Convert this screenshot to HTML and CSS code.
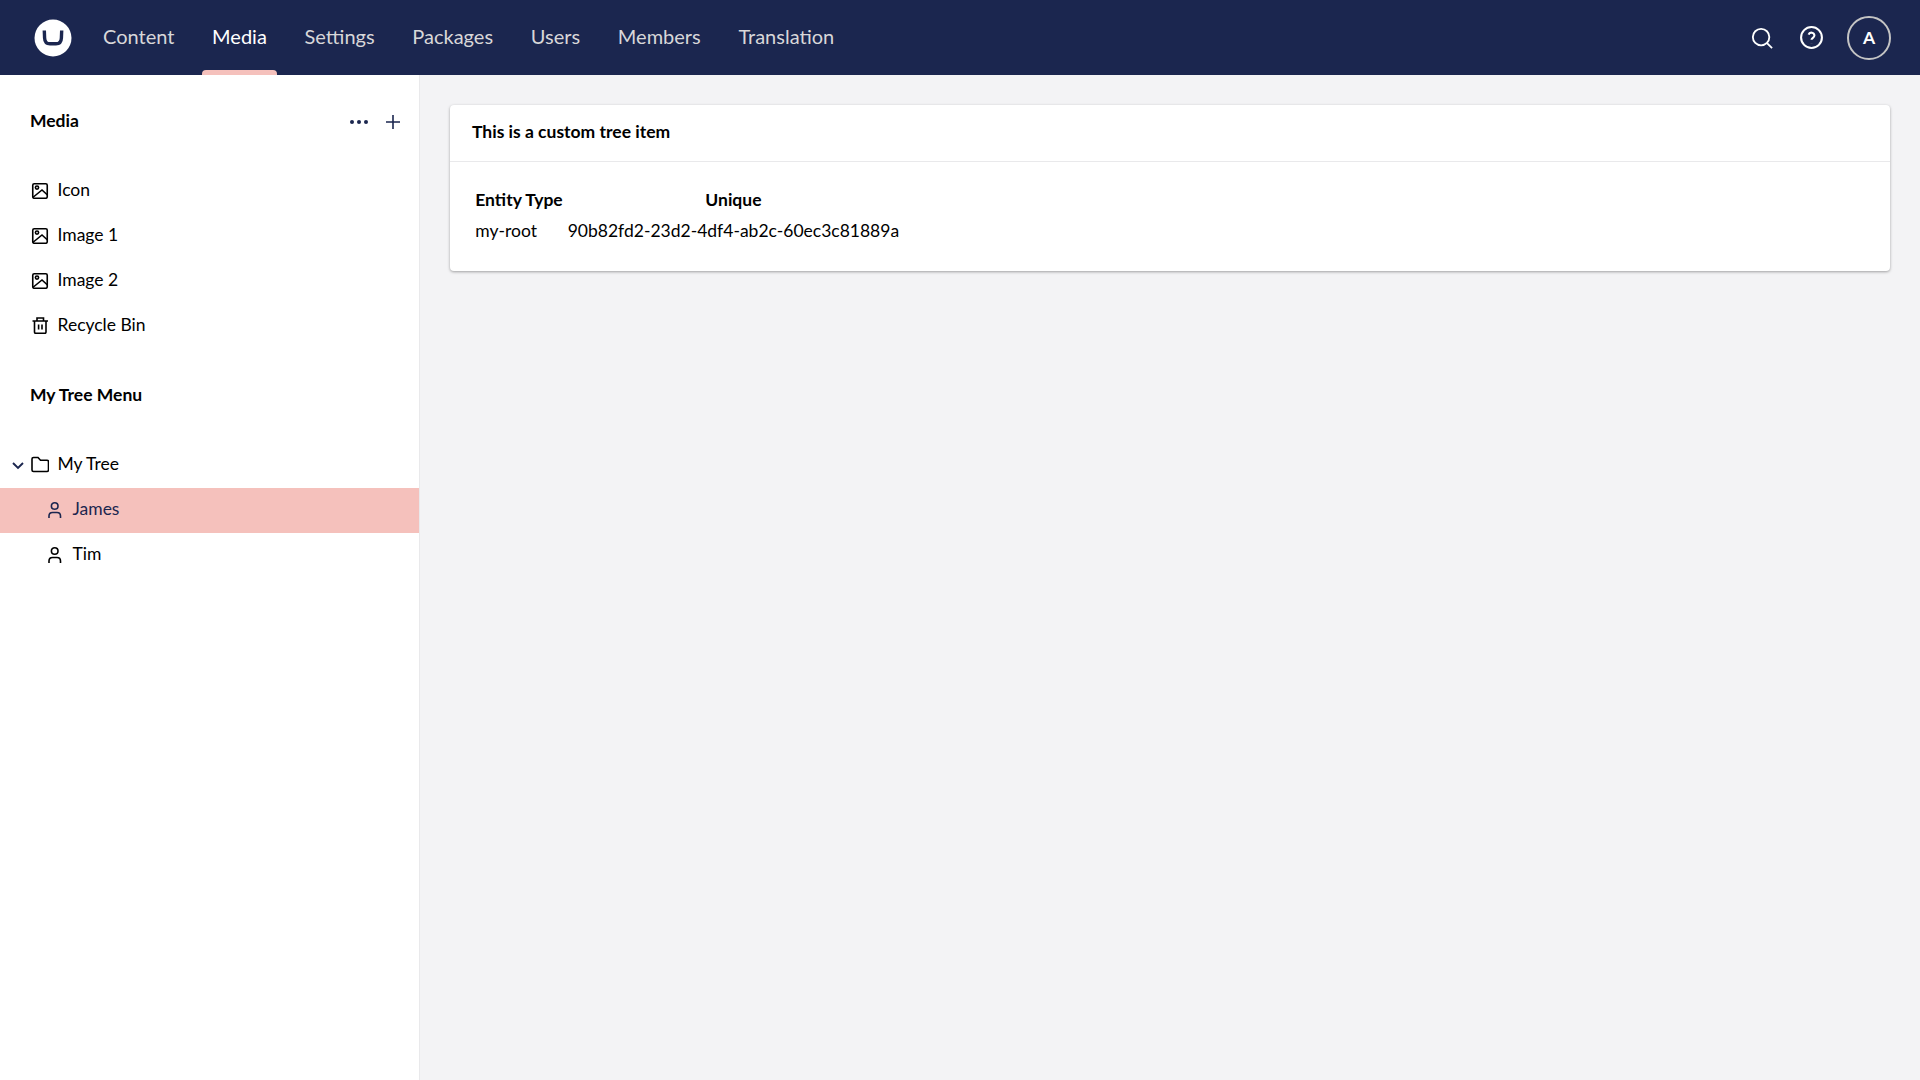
FILE: index.html
```html
<!DOCTYPE html>
<html lang="en">

<head>
  <meta charset="UTF-8" />
  <title>Media</title>
  <link rel="stylesheet" href="styles.css">
</head>

<body>
  <header class="topbar">
    <svg class="logo" viewBox="0 0 38 38" width="38" height="38">
      <circle cx="19" cy="19" r="18.5" fill="#fff" />
      <path d="M10.3 11.5 L10.6 19 Q10.8 24.8 16 24.8 H22 Q27.2 24.8 27.4 19 L27.7 11.5" fill="none" stroke="#1b264f" stroke-width="3.4" />
    </svg>
    <nav class="sections">
      <a>Content</a>
      <a class="active">Media</a>
      <a>Settings</a>
      <a>Packages</a>
      <a>Users</a>
      <a>Members</a>
      <a>Translation</a>
    </nav>
    <div class="tools">
      <svg class="tool search" viewBox="0 0 24 24" width="22" height="22">
        <circle cx="11" cy="11" r="9" />
        <path d="M17.5 17.5 L23 23" />
      </svg>
      <svg class="tool help" viewBox="0 0 24 24" width="25" height="25">
        <circle cx="12" cy="12" r="10" />
        <path d="M9.2 9.2 a2.9 2.9 0 0 1 5.6 1 c0 1.9 -2.8 2.4 -2.8 4" />
        <path d="M12 17.4 v0.1" />
      </svg>
      <div class="avatar">A</div>
    </div>
  </header>

  <div class="main">
    <aside class="sidebar">
      <section class="menu">
        <div class="menu-head">
          <h3>Media</h3>
          <div class="menu-actions">
            <svg viewBox="0 0 20 6" width="20" height="6">
              <circle cx="3" cy="3" r="2" />
              <circle cx="10" cy="3" r="2" />
              <circle cx="17" cy="3" r="2" />
            </svg>
            <svg class="plus" viewBox="0 0 14 14" width="14" height="14">
              <path d="M7 0 V14 M0 7 H14" />
            </svg>
          </div>
        </div>
        <ul class="tree">
          <li>
            <svg class="icon" viewBox="0 0 18 18">
              <rect x="1.75" y="2.75" width="14.5" height="14.5" rx="1.5" />
              <circle cx="6" cy="6.6" r="1.6" />
              <path d="M1.75 16.5 L11 9 L16.5 14" />
            </svg>
            Icon
          </li>
          <li>
            <svg class="icon" viewBox="0 0 18 18">
              <rect x="1.75" y="2.75" width="14.5" height="14.5" rx="1.5" />
              <circle cx="6" cy="6.6" r="1.6" />
              <path d="M1.75 16.5 L11 9 L16.5 14" />
            </svg>
            Image 1
          </li>
          <li>
            <svg class="icon" viewBox="0 0 18 18">
              <rect x="1.75" y="2.75" width="14.5" height="14.5" rx="1.5" />
              <circle cx="6" cy="6.6" r="1.6" />
              <path d="M1.75 16.5 L11 9 L16.5 14" />
            </svg>
            Image 2
          </li>
          <li>
            <svg class="icon" viewBox="0 0 18 18">
              <path d="M1.5 5 H17 M6 5 V2 H12.5 V5 M3.5 5 V16 Q3.5 17.4 5 17.4 H13.5 Q15 17.4 15 16 V5 M7.6 8.5 V13.5 M11 8.5 V13.5" />
            </svg>
            Recycle Bin
          </li>
        </ul>
      </section>

      <section class="menu custom">
        <div class="menu-head">
          <h3>My Tree Menu</h3>
        </div>
        <ul class="tree">
          <li>
            <svg class="caret" viewBox="0 0 12 8" width="12" height="8">
              <path d="M1 1 L6 6 L11 1" />
            </svg>
            <svg class="icon" viewBox="0 0 18 18">
              <path d="M1 3 Q1 1.5 2.5 1.5 H7 L9.5 4.2 H16 Q17.5 4.2 17.5 5.7 V14 Q17.5 15.5 16 15.5 H2.5 Q1 15.5 1 14 Z" />
            </svg>
            My Tree
          </li>
          <li class="child selected">
            <svg class="icon" viewBox="0 0 18 18">
              <circle cx="8.7" cy="5" r="3.3" />
              <path d="M3 17 V15 Q3 11.5 6.5 11.5 H11 Q14.5 11.5 14.5 15 V17" />
            </svg>
            James
          </li>
          <li class="child">
            <svg class="icon" viewBox="0 0 18 18">
              <circle cx="8.7" cy="5" r="3.3" />
              <path d="M3 17 V15 Q3 11.5 6.5 11.5 H11 Q14.5 11.5 14.5 15 V17" />
            </svg>
            Tim
          </li>
        </ul>
      </section>
    </aside>

    <main class="content">
      <div class="card">
        <div class="card-head">This is a custom tree item</div>
        <div class="card-body">
          <table>
            <thead>
              <tr>
                <th>Entity Type</th>
                <th>Unique</th>
              </tr>
            </thead>
            <tbody>
              <tr>
                <td>my-root</td>
                <td>90b82fd2-23d2-4df4-ab2c-60ec3c81889a</td>
              </tr>
            </tbody>
          </table>
        </div>
      </div>
    </main>
  </div>
</body>

</html>
```

FILE: styles.css
```css
* {
  box-sizing: border-box;
}

body {
  margin: 0;
  height: 1080px;
  overflow: hidden;
  font-family: Lato, "Noto Sans", sans-serif;
  font-size: 17.5px;
  color: #000;
  background: #f3f3f5;
}

.topbar {
  display: flex;
  align-items: center;
  height: 75px;
  padding: 0 29px 0 34px;
  background: #1b264f;
}

.logo {
  flex: none;
}

.sections {
  display: flex;
  align-self: stretch;
  margin-left: 21px;
}

.sections a {
  position: relative;
  display: flex;
  align-items: center;
  padding: 0 10px 3px;
  margin-right: 17.7px;
  font-size: 20px;
  color: #d8d7d9;
}

.sections a.active {
  color: #fff;
}

.sections a.active::after {
  content: '';
  position: absolute;
  left: 0;
  right: 0;
  bottom: 0;
  height: 5px;
  border-radius: 4px 4px 0 0;
  background: #f5c1bc;
}

.tools {
  display: flex;
  align-items: center;
  margin-left: auto;
}

.tool {
  fill: none;
  stroke: #fff;
  stroke-width: 2;
}

.search {
  margin-right: 26px;
}

.help {
  margin-right: 23px;
}

.avatar {
  display: flex;
  align-items: center;
  justify-content: center;
  width: 44px;
  height: 44px;
  margin-top: 1px;
  padding-bottom: 2px;
  border: 2px solid #c4c4c4;
  border-radius: 50%;
  font-size: 17.5px;
  font-weight: 700;
  color: #fff;
}

.main {
  display: flex;
  height: 1005px;
}

.sidebar {
  flex: none;
  width: 420px;
  padding-top: 22px;
  background: #fff;
  border-right: 1px solid #e9e9eb;
}

.menu {
  margin-bottom: 23px;
}

.menu-head {
  display: flex;
  align-items: center;
  justify-content: space-between;
  height: 46px;
  padding: 0 19px 0 30px;
  margin-bottom: 25px;
}

.custom .menu-head {
  margin-bottom: 26px;
}

.menu-head h3 {
  margin: 0;
  font-size: 17.5px;
  font-weight: 700;
}

.menu-actions {
  display: flex;
  align-items: center;
  gap: 17px;
  margin-top: 3px;
  fill: #1b264f;
}

.plus {
  fill: none;
  stroke: #1b264f;
  stroke-width: 1.6;
}

.tree {
  list-style: none;
  padding: 0;
  margin: 0;
}

.tree li {
  position: relative;
  display: flex;
  align-items: center;
  gap: 8.5px;
  height: 45px;
  padding-bottom: 3px;
  padding-left: 31px;
}

.tree li.child {
  padding-left: 46px;
}

.tree li.selected {
  background: #f5c1bc;
  color: #1b264f;
}

.custom .tree li {
  padding-bottom: 5px;
}

.icon {
  flex: none;
  width: 18px;
  height: 18px;
  margin-top: 2px;
  fill: none;
  stroke: currentColor;
  stroke-width: 1.6;
}

.custom .icon {
  margin-top: 4px;
}

.caret {
  position: absolute;
  left: 12px;
  margin-top: 6px;
  fill: none;
  stroke: #1b264f;
  stroke-width: 1.9;
}

.content {
  flex: 1;
  padding: 30px 30px 0;
}

.card {
  height: 166px;
  background: #fff;
  border-radius: 4px;
  box-shadow: 0 1px 3px rgba(0, 0, 0, 0.35);
}

.card-head {
  display: flex;
  align-items: center;
  height: 57px;
  padding: 0 22px 3px;
  border-bottom: 1px solid #e9e9eb;
  font-size: 17.5px;
  font-weight: 700;
}

.card-body {
  padding: 22px 24px;
}

table {
  border-spacing: 0;
  border-collapse: separate;
}

th,
td {
  padding: 3px 0 3px 1.25px;
  line-height: 25px;
  font-weight: 400;
}

th {
  font-weight: 700;
}

td + td,
th + th {
  padding-left: 5px;
}
```
